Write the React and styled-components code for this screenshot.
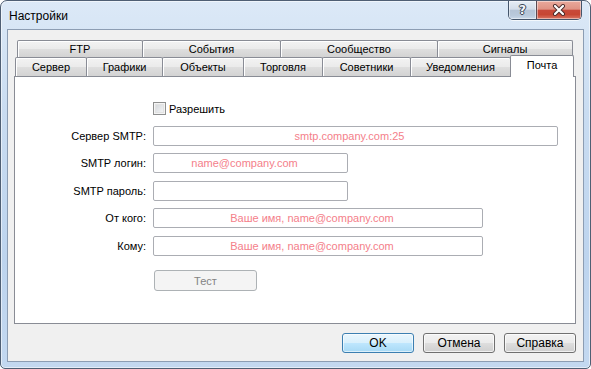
import React from "react";
import styled, { createGlobalStyle } from "styled-components";

const Global = createGlobalStyle`
  html, body { margin: 0; padding: 0; background: #ffffff; }
  body { font-family: "Liberation Sans", Arial, sans-serif; font-size: 11px; color: #000; }
  * { box-sizing: border-box; }
`;

const Window = styled.div`
  width: 591px;
  height: 369px;
  border: 1px solid #4f5f74;
  border-radius: 7px 7px 5px 5px;
  background: linear-gradient(180deg, #dce9f7 0%, #c9dcf1 30%, #bdd4ee 70%, #c3d8f0 100%);
  box-shadow: inset 0 0 0 1px rgba(255, 255, 255, 0.55);
  display: flex;
  flex-direction: column;
  overflow: hidden;
`;

const TitleBar = styled.div`
  height: 28px;
  display: flex;
  align-items: flex-start;
  padding: 0 8px 0 8px;
`;

const Title = styled.div`
  font-size: 12px;
  line-height: 12px;
  margin-top: 9px;
  color: #000;
`;

const CaptionGroup = styled.div`
  margin-left: auto;
  display: flex;
  height: 19px;
  border: 1px solid #44556b;
  border-top: none;
  border-radius: 0 0 5px 5px;
  overflow: hidden;
  box-shadow: 0 1px 0 rgba(255,255,255,0.7);
`;

const CaptionButton = styled.div`
  width: ${(p) => p.$w}px;
  height: 100%;
  display: flex;
  align-items: center;
  justify-content: center;
  background: ${(p) =>
    p.$close
      ? "linear-gradient(180deg, #e9a99c 0%, #df9384 45%, #c8493a 52%, #c74633 75%, #d97564 100%)"
      : "linear-gradient(180deg, #e6edf5 0%, #d3dde9 45%, #b5c4d6 52%, #b9c9db 80%, #c9d8e8 100%)"};
  border-left: ${(p) => (p.$close ? "1px solid #5a4a52" : "none")};
  box-shadow: inset 0 0 0 1px rgba(255,255,255,0.45);
`;

const HelpGlyph = styled.span`
  font-family: "DejaVu Sans", sans-serif;
  font-weight: bold;
  font-size: 12px;
  color: #f4f6f9;
  text-shadow: 0 0 1px #3a4656, 1px 0 0 #3a4656, -1px 0 0 #3a4656, 0 1px 0 #3a4656, 0 -1px 0 #3a4656;
  line-height: 12px;
`;

const Client = styled.div`
  flex: 1;
  margin: 0 6px 6px 6px;
  border: 1px solid #8c9db3;
  background: #f0f0f0;
  display: flex;
  flex-direction: column;
  padding: 10px 7px 8px 6px;
`;

const TabArea = styled.div`
  display: flex;
  flex-direction: column;
`;

const TabRow = styled.div`
  display: flex;
  align-items: flex-end;
  height: ${(p) => p.$h}px;
  padding-left: ${(p) => p.$indent}px;
`;

const Tab = styled.div`
  position: relative;
  width: ${(p) => p.$w}px;
  height: ${(p) => (p.$active ? 22 : p.$h)}px;
  margin-right: -1px;
  margin-bottom: ${(p) => (p.$active ? -1 : 0)}px;
  z-index: ${(p) => (p.$active ? 2 : 1)};
  border: 1px solid #898c95;
  border-bottom: none;
  border-radius: 2px 2px 0 0;
  background: ${(p) =>
    p.$active
      ? "#ffffff"
      : "linear-gradient(180deg, #f3f3f3 0%, #ebebeb 48%, #dedede 52%, #d3d3d3 100%)"};
  box-shadow: ${(p) => (p.$active ? "none" : "inset 1px 1px 0 #ffffff")};
  display: flex;
  justify-content: center;
  align-items: ${(p) => (p.$active ? "flex-start" : "center")};
  padding-top: ${(p) => (p.$active ? 3 : 0)}px;
  font-size: 11px;
  line-height: 13px;
  white-space: nowrap;
`;

const Panel = styled.div`
  flex: 1;
  background: #ffffff;
  border: 1px solid #898c95;
  padding: 25px 0 0 0;
`;

const Form = styled.div`
  display: grid;
  grid-template-columns: 138px auto;
  row-gap: 7.5px;
  align-items: center;
`;

const Label = styled.div`
  text-align: right;
  padding-right: 7px;
  font-size: 11px;
  white-space: nowrap;
`;

const CheckRow = styled.div`
  grid-column: 2;
  display: flex;
  align-items: center;
  gap: 3px;
  height: 13px;
  margin-bottom: 3px;
`;

const CheckBox = styled.div`
  width: 13px;
  height: 13px;
  border: 1px solid #8e8f8f;
  background: linear-gradient(135deg, #cfd2d6 0%, #eceef0 70%, #f6f6f6 100%);
  box-shadow: inset 0 0 0 1px #f4f4f4, inset 0 0 0 2px #e2e2e2;
`;

const Field = styled.div`
  width: ${(p) => p.$w}px;
  height: 20px;
  border: 1px solid #abadb3;
  border-radius: 2px;
  background: #ffffff;
  color: #f4808a;
  font-size: 11px;
  line-height: 18px;
  text-align: center;
  padding-right: 12px;
  white-space: nowrap;
`;

const TestButton = styled.div`
  grid-column: 2;
  margin-top: 7px;
  margin-left: 1px;
  width: 103px;
  height: 21px;
  border: 1px solid #adb2b5;
  border-radius: 3px;
  background: #f4f4f4;
  color: #838383;
  font-size: 11px;
  display: flex;
  align-items: center;
  justify-content: center;
`;

const Footer = styled.div`
  display: flex;
  justify-content: flex-end;
  gap: 9px;
  margin-top: 9px;
`;

const Button = styled.div`
  width: 72px;
  height: 20px;
  border: 1px solid ${(p) => (p.$default ? "#3c7fb1" : "#707070")};
  border-radius: 3px;
  background: ${(p) =>
    p.$default
      ? "linear-gradient(180deg, #eaf6fd 0%, #d9f0fc 48%, #bee6fd 52%, #a7d9f5 100%)"
      : "linear-gradient(180deg, #f2f2f2 0%, #ebebeb 48%, #dddddd 52%, #cfcfcf 100%)"};
  box-shadow: inset 0 0 0 1px ${(p) => (p.$default ? "rgba(255,255,255,0.6)" : "rgba(255,255,255,0.7)")};
  font-size: 12px;
  display: flex;
  align-items: center;
  justify-content: center;
`;

const upperTabs = [
  { t: "FTP", w: 126 },
  { t: "События", w: 139 },
  { t: "Сообщество", w: 158 },
  { t: "Сигналы", w: 136 },
];

const lowerTabs = [
  { t: "Сервер", w: 72 },
  { t: "Графики", w: 77 },
  { t: "Объекты", w: 82 },
  { t: "Торговля", w: 80 },
  { t: "Советники", w: 89 },
  { t: "Уведомления", w: 101 },
  { t: "Почта", w: 64, active: true },
];

const fields = [
  { label: "Сервер SMTP:", w: 405, v: "smtp.company.com:25" },
  { label: "SMTP логин:", w: 195, v: "name@company.com" },
  { label: "SMTP пароль:", w: 195, v: "" },
  { label: "От кого:", w: 330, v: "Ваше имя, name@company.com" },
  { label: "Кому:", w: 330, v: "Ваше имя, name@company.com" },
];

export default function App() {
  return (
    <>
      <Global />
      <Window>
        <TitleBar>
          <Title>Настройки</Title>
          <CaptionGroup>
            <CaptionButton $w={27}>
              <HelpGlyph>?</HelpGlyph>
            </CaptionButton>
            <CaptionButton $w={45} $close>
              <svg width="14" height="12" viewBox="0 0 14 12">
                <path d="M3 2 L11 10 M11 2 L3 10" stroke="#4a2a2a" strokeWidth="4" strokeLinecap="round" />
                <path d="M3 2 L11 10 M11 2 L3 10" stroke="#ffffff" strokeWidth="2.2" strokeLinecap="round" />
              </svg>
            </CaptionButton>
          </CaptionGroup>
        </TitleBar>
        <Client>
          <TabArea>
            <TabRow $h={17} $indent={3}>
              {upperTabs.map((x) => (
                <Tab key={x.t} $w={x.w} $h={17}>{x.t}</Tab>
              ))}
            </TabRow>
            <TabRow $h={19} $indent={1}>
              {lowerTabs.map((x) => (
                <Tab key={x.t} $w={x.w} $h={19} $active={x.active}>{x.t}</Tab>
              ))}
            </TabRow>
          </TabArea>
          <Panel>
            <Form>
              <CheckRow>
                <CheckBox />
                <span>Разрешить</span>
              </CheckRow>
              {fields.map((f) => (
                <React.Fragment key={f.label}>
                  <Label>{f.label}</Label>
                  <Field $w={f.w}>{f.v}</Field>
                </React.Fragment>
              ))}
              <TestButton>Тест</TestButton>
            </Form>
          </Panel>
          <Footer>
            <Button $default>OK</Button>
            <Button>Отмена</Button>
            <Button>Справка</Button>
          </Footer>
        </Client>
      </Window>
    </>
  );
}
